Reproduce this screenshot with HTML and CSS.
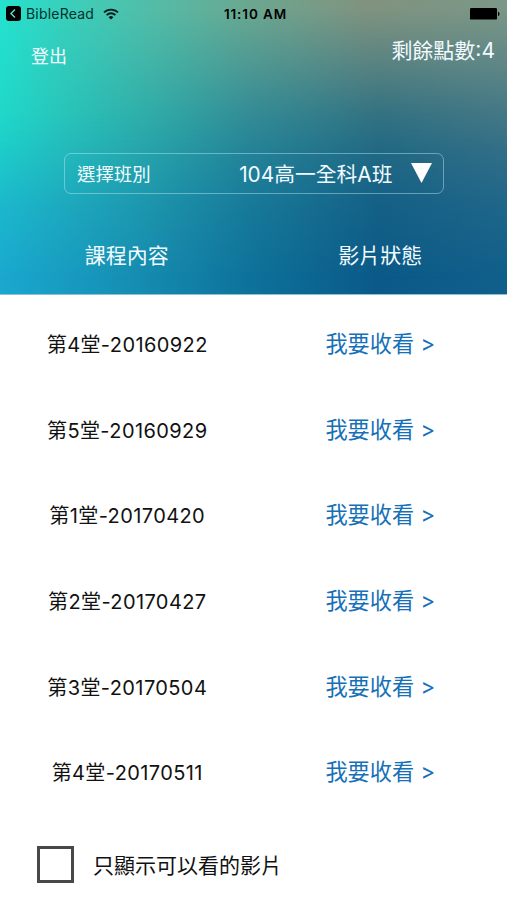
FILE: index.html
```
<!DOCTYPE html>
<html lang="zh-Hant">
<head>
    <meta charset="UTF-8">
    <meta name="viewport" content="width=device-width, initial-scale=1.0">
    <title>課程內容</title>
    <link rel="stylesheet" href="styles.css">
</head>
<body>
    <header class="header">
        <div class="status-bar">
            <div class="back-app">
                <svg width="15" height="15" viewBox="0 0 15 15">
                    <rect width="15" height="15" rx="3"/>
                    <path d="M9 3.5 5 7.5l4 4" fill="none" stroke="#5fd8c8" stroke-width="1.5"/>
                </svg>
                <span class="app-name">BibleRead</span>
                <svg class="wifi" width="16" height="12" viewBox="0 0 16 12">
                    <g fill="none" stroke="#06201d" stroke-width="1.8">
                        <path d="M1 4.4a10 10 0 0 1 14 0"/>
                        <path d="M3.6 7.1a6.2 6.2 0 0 1 8.8 0"/>
                    </g>
                    <path d="M8 11.6 5.6 9.2a3.4 3.4 0 0 1 4.8 0z" fill="#06201d"/>
                </svg>
            </div>
            <div class="clock">11:10 AM</div>
            <svg class="battery" width="30" height="12" viewBox="0 0 30 12">
                <rect width="27" height="11.6" rx="1.2"/>
                <path d="M28 3.8c2 .5 2 3.7 0 4.2z"/>
            </svg>
        </div>

        <div class="account">
            <a class="logout">登出</a>
            <span class="points">剩餘點數:4</span>
        </div>

        <div class="class-select">
            <span class="select-label">選擇班別</span>
            <span class="select-value">104高一全科A班</span>
            <svg width="21" height="20" viewBox="0 0 21 20"><path d="M0 0h21L10.5 20z" fill="#fff"/></svg>
        </div>

        <div class="columns">
            <span>課程內容</span>
            <span>影片狀態</span>
        </div>
    </header>

    <ul class="lessons">
        <li><span class="lesson">第4堂-20160922</span><a class="watch">我要收看 &gt;</a></li>
        <li><span class="lesson">第5堂-20160929</span><a class="watch">我要收看 &gt;</a></li>
        <li><span class="lesson">第1堂-20170420</span><a class="watch">我要收看 &gt;</a></li>
        <li><span class="lesson">第2堂-20170427</span><a class="watch">我要收看 &gt;</a></li>
        <li><span class="lesson">第3堂-20170504</span><a class="watch">我要收看 &gt;</a></li>
        <li><span class="lesson">第4堂-20170511</span><a class="watch">我要收看 &gt;</a></li>
    </ul>

    <label class="filter">
        <input type="checkbox">
        <span>只顯示可以看的影片</span>
    </label>
</body>
</html>
```
FILE: styles.css
```
* {
    box-sizing: border-box;
}
body {
    margin: 0;
    height: 900px;
    overflow: hidden;
    background: #fff;
    color: #111;
    font-family: Inter, "Noto Sans CJK TC", sans-serif;
}

/* header: three horizontal gradients blended from top to bottom */
.header {
    position: relative;
    isolation: isolate;
    height: 295px;
    color: #f2fbff;
    background: linear-gradient(to right, #1aa8cf, #168fb4 25%, #0d719a 50%, #0a5988 75%, #105f8b);
    border-bottom: 1px solid #8fc0d6;
}
.header::before,
.header::after {
    content: "";
    position: absolute;
    inset: 0;
    z-index: -1;
}
.header::before {
    background: linear-gradient(to right, #1fd7c9, #26c4bb 12%, #2ba9a8 30%, #2b8796 50%, #286d82 75%, #3c7386);
    mask-image: linear-gradient(to bottom, #000 38%, rgba(0, 0, 0, .8) 50%, rgba(0, 0, 0, .35) 70%, transparent 95%);
}
.header::after {
    background: linear-gradient(to right, #24e2cf, #35d3bf 10%, #4bc3ae 24%, #6aa891 48%, #80937f 72%, #7b9787);
    mask-image: linear-gradient(to bottom, #000 3%, rgba(0, 0, 0, .55) 22%, rgba(0, 0, 0, .15) 38%, transparent 52%);
}

.status-bar {
    display: grid;
    grid-template-columns: 1fr auto 1fr;
    align-items: center;
    height: 27px;
    padding: 0 7px 0 6px;
    color: #000;
}
.back-app {
    display: flex;
    align-items: center;
}
.app-name {
    margin-left: 5px;
    color: #06312d;
    font-size: 14px;
    line-height: 17px;
    letter-spacing: .2px;
}
.wifi {
    margin-left: 9px;
}
.clock {
    padding-left: 5px;
    font-size: 13.5px;
    font-weight: 600;
    letter-spacing: .9px;
}
.battery {
    justify-self: end;
}

.account {
    display: flex;
    justify-content: space-between;
    height: 126px;
    padding: 9px 12px 0 31px;
}
.logout {
    margin-top: 8px;
    font-size: 18px;
    line-height: 26px;
}
.points {
    font-size: 21px;
    line-height: 30px;
}

.class-select {
    display: flex;
    align-items: center;
    width: 380px;
    height: 41px;
    margin-left: 64px;
    padding: 0 11px 1px 12px;
    border: 1px solid rgba(190, 235, 245, .45);
    border-radius: 7px;
}
.select-label {
    flex: 1;
    font-size: 18.4px;
}
.select-value {
    margin-right: 18.5px;
    font-size: 20.8px;
}

.columns {
    display: grid;
    grid-template-columns: 1fr 1fr;
    margin-top: 47px;
    text-align: center;
    font-size: 21px;
    line-height: 30px;
}

.lessons {
    margin: 0;
    padding: 6px 0 0;
    list-style: none;
}
.lessons li {
    display: grid;
    grid-template-columns: 1fr 1fr;
    align-items: center;
    height: 85.6px;
    text-align: center;
}
.lesson {
    padding-left: 1px;
    font-size: 20px;
    letter-spacing: .4px;
}
.watch {
    padding-bottom: 3px;
    color: #1670b8;
    font-size: 22.2px;
}

.filter {
    display: flex;
    align-items: center;
    gap: 19px;
    padding: 31px 0 0 37px;
    font-size: 21px;
}
.filter input {
    appearance: none;
    width: 37px;
    height: 37px;
    margin: 0;
    border: 3px solid #484848;
}
```
